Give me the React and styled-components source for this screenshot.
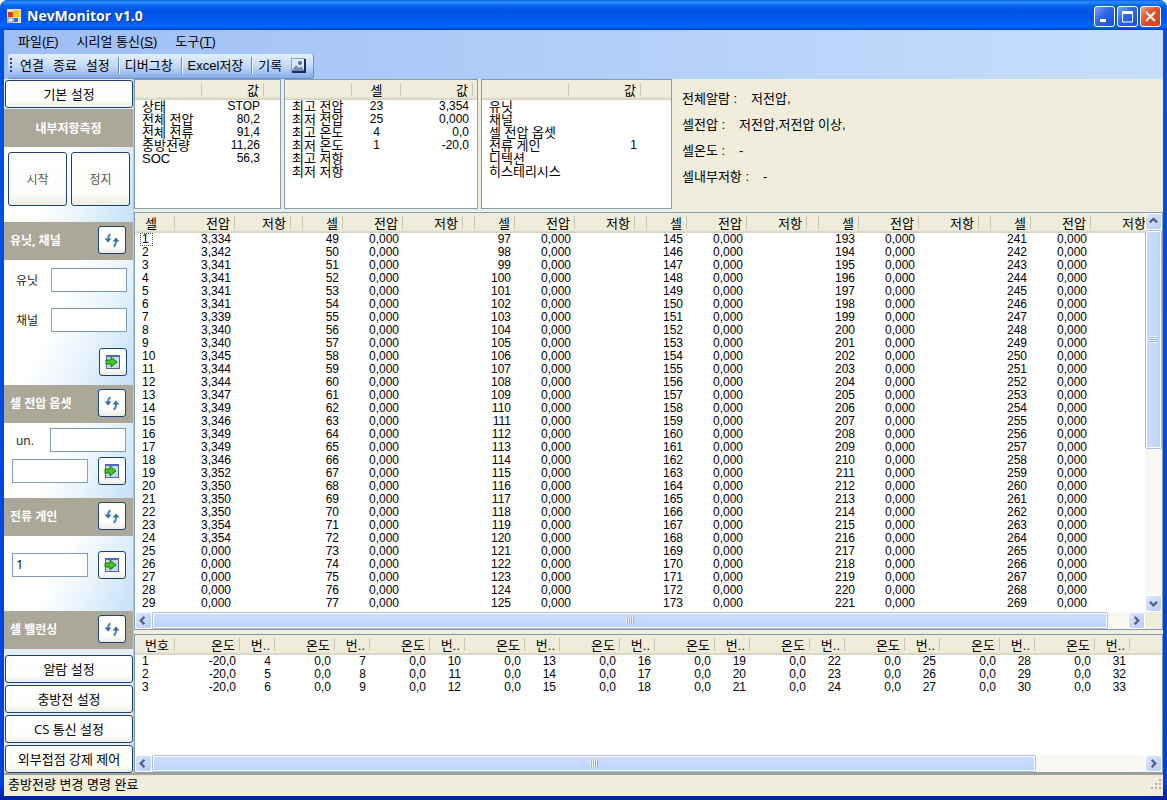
import React from "react";
import styled, { createGlobalStyle, css } from "styled-components";

const baseFont = `"Liberation Sans", "Noto Sans CJK KR", sans-serif`;
const panelFont = `"Open Sans", "Noto Sans CJK KR", sans-serif`;

const GlobalStyle = createGlobalStyle`
  * {
    box-sizing: border-box;
  }
  body {
    margin: 0;
    background: #fff;
    color: #000;
    font: 13px/13px ${baseFont};
  }
  button, input {
    font: inherit;
    color: inherit;
    margin: 0;
  }
`;

const Window = styled.div`
  display: flex;
  flex-direction: column;
  height: 100vh;
  min-height: 640px;
  padding: 0 4px 4px;
  background: linear-gradient(#0054e3, #0040dd 98%, #001ea0);
  border-radius: 8px 8px 0 0;
  overflow: hidden;
`;

const TitleBar = styled.header`
  display: flex;
  flex: none;
  align-items: center;
  gap: 6px;
  height: 30px;
  margin: 0 -4px;
  padding: 2px 6px 0 7px;
  background: linear-gradient(#0a5fe0, #2a90ff 7%, #0a63f0 18%, #0054e3 35%, #0058ee 65%, #0066ff 85%, #0058e8 94%, #0038b8);
`;

const Title = styled.h1`
  flex: 1;
  margin: 0;
  color: #fff;
  font: bold 14px/20px ${panelFont};
  text-shadow: 1px 1px 0 #0a2a8c;
`;

const Caption = styled.div`
  display: flex;
  gap: 2px;
`;

const CaptionButton = styled.button`
  display: flex;
  align-items: center;
  justify-content: center;
  width: 21px;
  height: 21px;
  padding: 0;
  border: 1px solid #fff;
  border-radius: 3px;
  background: ${(p) =>
    p.$close
      ? "linear-gradient(135deg, #f0a088, #e4552e 40%, #d03c10)"
      : "linear-gradient(135deg, #7aa2f5, #2f66e8 45%, #1c4fd0)"};
`;

const Bars = styled.div`
  flex: none;
  background: linear-gradient(90deg, #9ebef5, #c6dffc);
`;

const MenuBar = styled.nav`
  display: flex;
  gap: 18px;
  height: 24px;
  padding: 0 14px 2px;
`;

const MenuItem = styled.button`
  padding: 0;
  border: 0;
  background: none;
`;

const ToolBar = styled.div`
  display: flex;
  align-items: center;
  width: max-content;
  height: 25px;
  margin-left: 4px;
  padding: 0 3px 1px 2px;
  border-bottom: 1px solid #6a8fd0;
  border-right: 1px solid #6a8fd0;
  border-radius: 3px;
  background: linear-gradient(#e3efff, #c4dafa 50%, #87abe8);
`;

const Grip = styled.span`
  width: 2px;
  height: 15px;
  margin-right: 3px;
  background: repeating-linear-gradient(#27418c 0 2px, transparent 2px 4px);
`;

const ToolButton = styled.button`
  padding: 0 4px 0 5px;
  border: 0;
  background: none;
`;

const ToolSeparator = styled.span`
  width: 2px;
  height: 17px;
  margin-left: 4px;
  border-left: 1px solid #6a8ccb;
  border-right: 1px solid #f1f9ff;
`;

const Body = styled.div`
  display: flex;
  flex: 1;
  min-height: 0;
  background: #f0eddc;
`;

const SideBar = styled.aside`
  display: flex;
  flex: none;
  flex-direction: column;
  width: 130px;
  border-right: 1px solid #b8c8d0;
  background: #e4eef2;
  font-family: ${panelFont};
`;

const xpButton = css`
  display: flex;
  align-items: center;
  justify-content: center;
  padding: 0;
  border: 1px solid #1c4470;
  border-radius: 3px;
  background: linear-gradient(#fff, #fdfdfb 75%, #eeece4);
`;

const WideButton = styled.button`
  ${xpButton}
  flex: none;
  height: 28px;
  margin: 1px 0 1px 1px;
`;

const SideHead = styled.h2`
  display: flex;
  flex: none;
  align-items: center;
  justify-content: ${(p) => (p.$center ? "center" : "space-between")};
  height: 38px;
  margin: 0;
  padding: ${(p) => (p.$center ? "0" : "0 7px 2px 6px")};
  background: #aca899;
  color: #fff;
  font-size: 12px;
  font-weight: bold;
`;

const SideSection = styled.div`
  display: flex;
  flex: none;
  flex-direction: column;
  height: ${(p) => p.$height}px;
  padding: ${(p) => p.$pad};
  gap: ${(p) => p.$gap || 0}px;
  background: linear-gradient(115deg, #fff 40%, #eaf4fc 65%, #c4e0f8);
`;

const SideRow = styled.div`
  display: flex;
  align-items: center;
  justify-content: ${(p) => p.$justify || "space-between"};
  gap: 4px;
`;

const BigButton = styled.button`
  ${xpButton}
  flex: 1;
  height: 54px;
  color: #555;
  font-size: 12px;
`;

const IconButton = styled.button`
  ${xpButton}
  width: 28px;
  height: 28px;
`;

const FieldLabel = styled.label`
  padding-left: 4px;
  color: #222;
  font-size: 12px;
`;

const TextBox = styled.input`
  width: 76px;
  height: 24px;
  padding: 0 3px 2px;
  border: 1px solid #7f9db9;
  background: #fff;
`;

const SideFoot = styled.div`
  display: flex;
  flex: 1;
  flex-direction: column;
  padding-top: 5px;
`;

const Main = styled.main`
  display: flex;
  flex: 1;
  flex-direction: column;
  gap: 3px;
  min-width: 0;
`;

const TopRow = styled.div`
  display: flex;
  flex: none;
  gap: 3px;
  height: 130px;
`;

const ListBox = styled.section`
  display: flex;
  flex-direction: column;
  flex: ${(p) => (p.$width ? `0 0 ${p.$width}px` : p.$grow ? "1 1 0" : "none")};
  height: ${(p) => (p.$height ? `${p.$height}px` : "auto")};
  margin-bottom: ${(p) => (p.$grow ? 1 : 0)}px;
  min-width: 0;
  min-height: 0;
  overflow: hidden;
  border: 1px solid #7f9db9;
  background: #fff;
`;

const ListArea = styled.div`
  display: flex;
  flex: 1;
  min-height: 0;
`;

const ListView = styled.div`
  flex: 1;
  min-width: 0;
  overflow: hidden;
  background: linear-gradient(#efecdc 0 17px, #e4e0ce 18px, #d2cebf 20px, #fff 20px);
`;

const Table = styled.table`
  width: ${(p) => (p.$fill ? "100%" : "0")};
  table-layout: fixed;
  border-collapse: collapse;
  white-space: nowrap;
`;

const Th = styled.th`
  height: 20px;
  padding: 0 ${(p) => (p.$align === "center" ? 0 : 5)}px 0 ${(p) => (p.$align === "left" ? 10 : 0)}px;
  background: linear-gradient(#c9c5b3, #c9c5b3) right 3px / 1px 13px no-repeat;
  font-weight: normal;
  text-align: ${(p) => p.$align || "right"};
`;

const Td = styled.td`
  height: 13px;
  padding: 0 ${(p) => (p.$align === "center" ? 0 : 4)}px 0 ${(p) => (p.$align === "left" ? 7 : 0)}px;
  font-size: ${(p) => (p.$value ? 12 : 13)}px;
  line-height: 13px;
  text-align: ${(p) => p.$align || "right"};
`;

const FocusMark = styled.span`
  display: inline-block;
  min-width: 13px;
  margin-left: -2px;
  padding-left: 2px;
  outline: 1px dotted #555;
  outline-offset: -1px;
`;

const Alarms = styled.dl`
  display: flex;
  flex: 1;
  flex-direction: column;
  gap: 13px;
  margin: 0;
  padding: 13px 0 0 7px;
`;

const Alarm = styled.div`
  display: flex;
  gap: 14px;

  dt, dd {
    margin: 0;
  }
`;

const Scroll = styled.div`
  display: flex;
  flex: none;
  flex-direction: ${(p) => (p.$vertical ? "column" : "row")};
  ${(p) => (p.$vertical ? "width: 17px;" : "height: 17px;")}
  background: #f8f8f5;
`;

const ScrollButton = styled.button`
  display: flex;
  align-items: center;
  justify-content: center;
  flex: none;
  width: 17px;
  height: 17px;
  padding: 0;
  border: 1px solid #fff;
  border-radius: 3px;
  background: linear-gradient(135deg, #dce6fe, #b8cbf8);
`;

const Track = styled.div`
  display: flex;
  flex: 1;
  flex-direction: ${(p) => (p.$vertical ? "column" : "row")};
`;

const Thumb = styled.div`
  display: flex;
  align-items: center;
  justify-content: center;
  flex: 0 0 ${(p) => p.$size}%;
  border: 1px solid #a8bfec;
  border-radius: 2px;
  box-shadow: inset 0 0 0 1px #fff;
  background: linear-gradient(${(p) => (p.$vertical ? "90deg" : "180deg")}, #cddcfe, #c6d8fd 50%, #b8d4fe);

  &::after {
    content: "";
    width: 8px;
    height: 7px;
    background: repeating-linear-gradient(${(p) => (p.$vertical ? "180deg" : "90deg")}, #eef4fe 0 1px, #8cb0f8 1px 2px);
  }
`;

const ScrollLine = styled.div`
  display: flex;
  flex: none;
  padding-right: ${(p) => (p.$corner ? 17 : 0)}px;
  background: #f0eddc;

  > div {
    flex: 1;
  }
`;

const StatusBar = styled.footer`
  display: flex;
  flex: none;
  align-items: center;
  justify-content: space-between;
  height: 23px;
  padding: 0 1px 3px 4px;
  border-top: 2px solid #a5a294;
  background: #f0eddc;
`;

const AppIcon = () => (
  <svg width="14" height="14" viewBox="0 0 14 14">
    <rect width="14" height="14" fill="#e8e4d8" />
    <rect x="1" y="3" width="5" height="5" fill="#d83818" />
    <rect x="6" y="1" width="7" height="7" fill="#f8c818" />
    <rect x="1" y="9" width="5" height="4" fill="#f4f4f4" stroke="#888" />
    <rect x="7" y="9" width="4" height="4" fill="#3868d0" />
  </svg>
);

const PictureIcon = () => (
  <svg width="15" height="15" viewBox="0 0 15 15" display="block">
    <rect x="0.5" y="0.5" width="13" height="13" fill="#dce8f8" stroke="#8ca4cc" />
    <path d="M1 12l4-5 3 3 2-2 3 4v1H1z" fill="#6f8fbe" />
    <path d="M14 1v13H1" fill="none" stroke="#1c2c58" strokeWidth="2" />
    <circle cx="9" cy="5" r="2" fill="#5068a8" />
  </svg>
);

const RefreshIcon = () => (
  <svg width="16" height="16" viewBox="0 0 16 16" fill="none" stroke="#4a80ba" strokeWidth="2">
    <path d="M6.500 2.500Q4 3.500 4 8" />
    <path d="M0.500 6.500L4 10.500L7.500 6.500Z" fill="#3a6ca8" stroke="none" />
    <path d="M9.500 14.500Q12 13.500 12 9" />
    <path d="M8.500 9.500L12 5.500L15.500 9.500Z" fill="#3a6ca8" stroke="none" />
  </svg>
);

const ApplyIcon = () => (
  <svg width="16" height="16" viewBox="0 0 16 16">
    <rect x="1.500" y="1.500" width="13" height="13" fill="#c4d8f2" stroke="#4a64b0" />
    <path d="M1 2h14" stroke="#4a68c8" strokeWidth="2" />
    <path d="M1 6h5V3l6 5-6 5v-3H1z" fill="#44c41c" stroke="#1c7810" />
  </svg>
);

const arrows = { left: "M6 1L2 5l4 4", right: "M3 1l4 4-4 4", up: "M1 6l4-4 4 4", down: "M1 3l4 4 4-4" };

const Arrow = ({ dir }) => (
  <ScrollButton aria-label={dir}>
    <svg width="9" height="9" viewBox="0 0 10 10">
      <path d={arrows[dir]} fill="none" stroke="#4d6185" strokeWidth="2.500" />
    </svg>
  </ScrollButton>
);

function ScrollBar({ vertical, size }) {
  return (
    <Scroll $vertical={vertical}>
      <Arrow dir={vertical ? "up" : "left"} />
      <Track $vertical={vertical}>
        <Thumb $vertical={vertical} $size={size} />
      </Track>
      <Arrow dir={vertical ? "down" : "right"} />
    </Scroll>
  );
}

function Grid({ cols, rows, fill, focus }) {
  return (
    <Table $fill={fill}>
      <colgroup>
        {cols.map((c, i) => (
          <col key={i} style={c.width ? { width: c.width } : undefined} />
        ))}
      </colgroup>
      <thead>
        <tr>
          {cols.map((c, i) => (
            <Th key={i} $align={c.align} style={c.width ? undefined : { background: "none" }}>
              {c.label}
            </Th>
          ))}
        </tr>
      </thead>
      <tbody>
        {rows.map((row, r) => (
          <tr key={r}>
            {cols.map((c, i) => (
              <Td key={i} $align={c.align} $value={i > 0 || typeof row[i] === "number"}>
                {focus && r === 0 && i === 0 ? <FocusMark>{row[i]}</FocusMark> : row[i]}
              </Td>
            ))}
          </tr>
        ))}
      </tbody>
    </Table>
  );
}

const stateCols = [{ width: 67, align: "left" }, { width: 62, label: "값" }, {}];
const stateRows = [
  ["상태", "STOP"],
  ["전체 전압", "80,2"],
  ["전체 전류", "91,4"],
  ["충방전량", "11,26"],
  ["SOC", "56,3"],
];

const peakCols = [{ width: 67, align: "left" }, { width: 49, label: "셀", align: "center" }, { width: 72, label: "값" }, {}];
const peakRows = [
  ["최고 전압", "23", "3,354"],
  ["최저 전압", "25", "0,000"],
  ["최고 온도", "4", "0,0"],
  ["최저 온도", "1", "-20,0"],
  ["최고 저항"],
  ["최저 저항"],
];

const unitCols = [{ width: 87, align: "left" }, { width: 72, label: "값" }, {}];
const unitRows = [["유닛"], ["채널"], ["셀 전압 옵셋"], ["전류 게인", "1"], ["디텍션"], ["히스테리시스"]];

const volts = [
  3334, 3342, 3341, 3341, 3341, 3341, 3339, 3340, 3340, 3345, 3344, 3344, 3347, 3349, 3346, 3349, 3349, 3346, 3352,
  3350, 3350, 3350, 3354, 3354,
];
const showVolt = (v) => (v ? `3,${v - 3000}` : "0,000");

const cellCols = [0, 1, 2, 3, 4, 5].flatMap((g) => [
  { width: 40, label: "셀", align: g ? "right" : "left" },
  { width: 60, label: "전압" },
  { width: g ? 60 : 56, label: "저항" },
  { width: 12 },
]);
const cellRows = Array.from({ length: 29 }, (_, r) =>
  [0, 1, 2, 3, 4, 5].flatMap((g) => [g * 48 + r + 1, showVolt(g ? 0 : volts[r]), "", ""])
);

const tempCols = [
  { width: 40, label: "번호", align: "left" },
  { width: 65, label: "온도" },
  ...Array.from({ length: 9 }, () => [{ width: 35, label: "번.." }, { width: 60, label: "온도" }]).flat(),
  { width: 35, label: "번.." },
  {},
];
const tempRows = [1, 2, 3].map((n) =>
  Array.from({ length: 11 }, (_, g) => [g * 3 + n, g === 0 ? "-20,0" : g < 10 ? "0,0" : ""]).flat()
);

const alarms = [
  ["전체알람 :", "저전압,"],
  ["셀전압 :", "저전압,저전압 이상,"],
  ["셀온도 :", "-"],
  ["셀내부저항 :", "-"],
];

const Refresh = ({ label }) => (
  <IconButton aria-label={label}>
    <RefreshIcon />
  </IconButton>
);

const Apply = ({ label }) => (
  <IconButton aria-label={label}>
    <ApplyIcon />
  </IconButton>
);

function Side() {
  return (
    <SideBar>
      <WideButton>기본 설정</WideButton>
      <SideHead $center>내부저항측정</SideHead>
      <SideSection $height={75} $pad="5px 3px 0 4px">
        <SideRow>
          <BigButton>시작</BigButton>
          <BigButton>정지</BigButton>
        </SideRow>
      </SideSection>
      <SideHead>
        유닛, 채널 <Refresh label="유닛, 채널 읽기" />
      </SideHead>
      <SideSection $height={125} $pad="8px 6px 0 8px" $gap={16}>
        <SideRow>
          <FieldLabel htmlFor="unit">유닛</FieldLabel>
          <TextBox id="unit" />
        </SideRow>
        <SideRow>
          <FieldLabel htmlFor="channel">채널</FieldLabel>
          <TextBox id="channel" />
        </SideRow>
        <SideRow $justify="flex-end">
          <Apply label="유닛, 채널 쓰기" />
        </SideRow>
      </SideSection>
      <SideHead>
        셀 전압 옵셋 <Refresh label="셀 전압 옵셋 읽기" />
      </SideHead>
      <SideSection $height={75} $pad="5px 7px 0 8px" $gap={5}>
        <SideRow>
          <FieldLabel htmlFor="offset-unit">un.</FieldLabel>
          <TextBox id="offset-unit" />
        </SideRow>
        <SideRow>
          <TextBox aria-label="셀 전압 옵셋" />
          <Apply label="셀 전압 옵셋 쓰기" />
        </SideRow>
      </SideSection>
      <SideHead>
        전류 게인 <Refresh label="전류 게인 읽기" />
      </SideHead>
      <SideSection $height={75} $pad="15px 7px 0 8px">
        <SideRow>
          <TextBox aria-label="전류 게인" defaultValue="1" />
          <Apply label="전류 게인 쓰기" />
        </SideRow>
      </SideSection>
      <SideHead>
        셀 밸런싱 <Refresh label="셀 밸런싱 읽기" />
      </SideHead>
      <SideFoot>
        <WideButton>알람 설정</WideButton>
        <WideButton>충방전 설정</WideButton>
        <WideButton>CS 통신 설정</WideButton>
        <WideButton>외부접점 강제 제어</WideButton>
      </SideFoot>
    </SideBar>
  );
}

export default function App() {
  return (
    <>
      <GlobalStyle />
      <Window>
        <TitleBar>
          <AppIcon />
          <Title>NevMonitor v1.0</Title>
          <Caption>
            <CaptionButton aria-label="최소화">
              <svg width="13" height="13">
                <path d="M2 10.500h6" stroke="#fff" strokeWidth="3" />
              </svg>
            </CaptionButton>
            <CaptionButton aria-label="최대화">
              <svg width="13" height="13">
                <path d="M1.500 2v10h10V2M1 2.500h11" fill="none" stroke="#fff" strokeWidth="1" />
                <path d="M1 2.500h11" stroke="#fff" strokeWidth="3" />
              </svg>
            </CaptionButton>
            <CaptionButton $close aria-label="닫기">
              <svg width="13" height="13">
                <path d="M2 2l9 9M11 2l-9 9" stroke="#fff" strokeWidth="2" />
              </svg>
            </CaptionButton>
          </Caption>
        </TitleBar>

        <Bars>
          <MenuBar>
            <MenuItem>파일(<u>F</u>)</MenuItem>
            <MenuItem>시리얼 통신(<u>S</u>)</MenuItem>
            <MenuItem>도구(<u>T</u>)</MenuItem>
          </MenuBar>
          <ToolBar>
            <Grip />
            <ToolButton>연결</ToolButton>
            <ToolButton>종료</ToolButton>
            <ToolButton>설정</ToolButton>
            <ToolSeparator />
            <ToolButton>디버그창</ToolButton>
            <ToolSeparator />
            <ToolButton>Excel저장</ToolButton>
            <ToolSeparator />
            <ToolButton>기록</ToolButton>
            <ToolButton aria-label="그림">
              <PictureIcon />
            </ToolButton>
          </ToolBar>
        </Bars>

        <Body>
          <Side />
          <Main>
            <TopRow>
              <ListBox $width={147}>
                <ListView>
                  <Grid cols={stateCols} rows={stateRows} fill />
                </ListView>
              </ListBox>
              <ListBox $width={194}>
                <ListView>
                  <Grid cols={peakCols} rows={peakRows} fill />
                </ListView>
              </ListBox>
              <ListBox $width={191}>
                <ListView>
                  <Grid cols={unitCols} rows={unitRows} fill />
                </ListView>
              </ListBox>
              <Alarms>
                {alarms.map(([name, text]) => (
                  <Alarm key={name}>
                    <dt>{name}</dt>
                    <dd>{text}</dd>
                  </Alarm>
                ))}
              </Alarms>
            </TopRow>

            <ListBox $grow>
              <ListArea>
                <ListView>
                  <Grid cols={cellCols} rows={cellRows} focus />
                </ListView>
                <ScrollBar vertical size={60} />
              </ListArea>
              <ScrollLine $corner>
                <ScrollBar size={98} />
              </ScrollLine>
            </ListBox>

            <ListBox $height={139}>
              <ListArea>
                <ListView>
                  <Grid cols={tempCols} rows={tempRows} fill />
                </ListView>
              </ListArea>
              <ScrollLine>
                <ScrollBar size={89} />
              </ScrollLine>
            </ListBox>
          </Main>
        </Body>

        <StatusBar>
          <span>충방전량 변경 명령 완료</span>
          <svg width="12" height="12" fill="#b8b4a2">
            <path d="M9 1h2v2H9zM5 5h2v2H5zM9 5h2v2H9zM1 9h2v2H1zM5 9h2v2H5zM9 9h2v2H9z" />
          </svg>
        </StatusBar>
      </Window>
    </>
  );
}
